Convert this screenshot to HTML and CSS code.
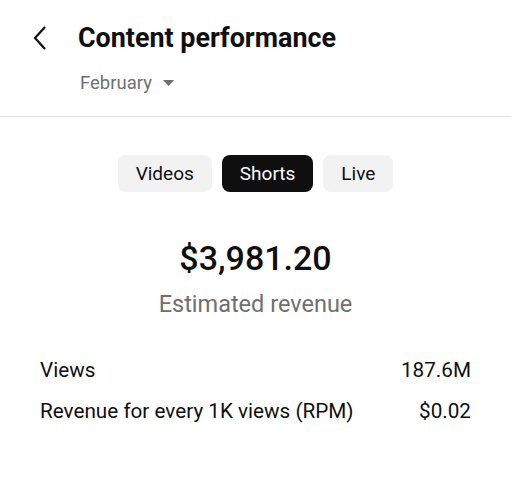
FILE: index.html
```html
<!DOCTYPE html>
<html lang="en">
<head>
  <meta charset="UTF-8" />
  <meta name="viewport" content="width=device-width, initial-scale=1.0" />
  <title>Content performance</title>
  <link rel="stylesheet" href="styles.css">
</head>
<body>
  <div class="header">
    <div class="title-row">
      <svg class="back" width="16" height="26" viewBox="0 0 16 26">
        <path d="M13 2 L3 13 L13 24" fill="none" stroke="#0f0f0f" stroke-width="2.2" />
      </svg>
      <h1>Content performance</h1>
    </div>
    <div class="month">
      February
      <svg width="11" height="6" viewBox="0 0 11 6"><path d="M0 0 H11 L5.5 6 Z" fill="#6f6f6f" /></svg>
    </div>
  </div>

  <div class="tabs">
    <button class="tab">Videos</button>
    <button class="tab selected">Shorts</button>
    <button class="tab">Live</button>
  </div>

  <div class="total">
    <div class="amount">$3,981.20</div>
    <div class="label">Estimated revenue</div>
  </div>

  <div class="stats">
    <div class="stat"><span>Views</span><span>187.6M</span></div>
    <div class="stat"><span>Revenue for every 1K views (RPM)</span><span>$0.02</span></div>
  </div>
</body>
</html>
```

FILE: styles.css
```css
body {
  font-family: Roboto, Arial, sans-serif;
  background-color: white;
  color: #0f0f0f;
  margin: 0;
  padding: 0;
}
.header {
  padding: 19px 0 0 0;
  border-bottom: 1px solid #e5e5e5;
  height: 97px;
}
.title-row {
  display: flex;
  align-items: center;
  padding-left: 32px;
}
.back {
  margin-right: 30px;
}
h1 {
  font-size: 26.9px;
  font-weight: 700;
  margin: 0;
  line-height: 38px;
}
.month {
  display: flex;
  align-items: center;
  gap: 11px;
  margin-left: 80px;
  margin-top: 15px;
  font-size: 18.5px;
  color: #6f6f6f;
}
.tabs {
  display: flex;
  justify-content: center;
  gap: 10px;
  margin-top: 38px;
}
.tab {
  font-family: Roboto, Arial, sans-serif;
  font-size: 19px;
  height: 37px;
  padding: 0 18px;
  background-color: #f2f2f2;
  color: #0f0f0f;
  border: none;
  border-radius: 8px;
}
.tab.selected {
  background-color: #0f0f0f;
  color: white;
}
.total {
  text-align: center;
  margin-top: 46px;
}
.amount {
  font-size: 34px;
  font-weight: 500;
  line-height: 40px;
}
.label {
  font-size: 23.5px;
  color: #6f6f6f;
  margin-top: 12px;
}
.stats {
  margin: 40px 40px 0 40px;
  display: flex;
  flex-direction: column;
  gap: 17px;
}
.stat {
  display: flex;
  justify-content: space-between;
  font-size: 20.7px;
}
```
